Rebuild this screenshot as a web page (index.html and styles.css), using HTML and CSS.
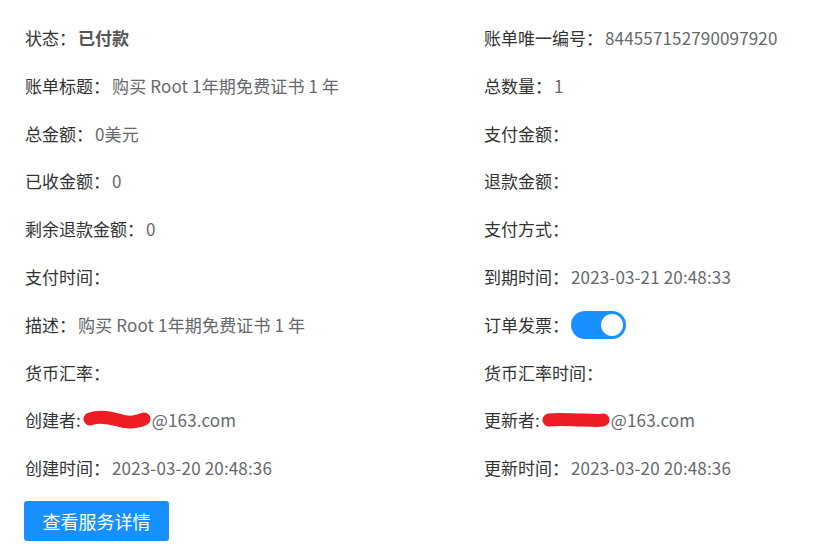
FILE: index.html
```html
<!DOCTYPE html>
<html lang="zh-CN">
<head>
<meta charset="utf-8">
<link rel="stylesheet" href="styles.css">
</head>
<body>
<div class="page">
  <div class="grid">
    <div class="item"><span class="label">状态：</span><span class="value strong">已付款</span></div>
    <div class="item"><span class="label">账单唯一编号：</span><span class="value">844557152790097920</span></div>

    <div class="item"><span class="label">账单标题：</span><span class="value">购买 Root 1年期免费证书 1 年</span></div>
    <div class="item"><span class="label">总数量：</span><span class="value">1</span></div>

    <div class="item"><span class="label">总金额：</span><span class="value">0美元</span></div>
    <div class="item"><span class="label">支付金额：</span><span class="value"></span></div>

    <div class="item"><span class="label">已收金额：</span><span class="value">0</span></div>
    <div class="item"><span class="label">退款金额：</span><span class="value"></span></div>

    <div class="item"><span class="label">剩余退款金额：</span><span class="value">0</span></div>
    <div class="item"><span class="label">支付方式：</span><span class="value"></span></div>

    <div class="item"><span class="label">支付时间：</span><span class="value"></span></div>
    <div class="item"><span class="label">到期时间：</span><span class="value">2023-03-21 20:48:33</span></div>

    <div class="item"><span class="label">描述：</span><span class="value">购买 Root 1年期免费证书 1 年</span></div>
    <div class="item"><span class="label">订单发票：</span><span class="switch"><span class="knob"></span></span></div>

    <div class="item"><span class="label">货币汇率：</span><span class="value"></span></div>
    <div class="item"><span class="label">货币汇率时间：</span><span class="value"></span></div>

    <div class="item"><span class="label">创建者:</span><span class="scribble"><svg width="68" height="20" viewBox="0 0 68 20"><path d="M7 9 C 15 6, 25 7, 35 10 S 52 13, 61 9" fill="none" stroke="#ee1c25" stroke-width="13" stroke-linecap="round"/></svg></span><span class="value">@163.com</span></div>
    <div class="item"><span class="label">更新者:</span><span class="scribble"><svg width="68" height="20" viewBox="0 0 68 20"><path d="M7 10 C 18 9, 30 10, 40 10 S 56 11, 61 10" fill="none" stroke="#ee1c25" stroke-width="13" stroke-linecap="round"/></svg></span><span class="value">@163.com</span></div>

    <div class="item"><span class="label">创建时间：</span><span class="value">2023-03-20 20:48:36</span></div>
    <div class="item"><span class="label">更新时间：</span><span class="value">2023-03-20 20:48:36</span></div>
  </div>
  <button class="btn">查看服务详情</button>
</div>
</body>
</html>
```
FILE: styles.css
```css
html, body {
  margin: 0;
  padding: 0;
  background: #fff;
}
.page {
  padding: 26px 0 0 25px;
  font-family: "Noto Sans CJK SC", "Noto Sans", sans-serif;
  font-size: 17px;
}
.grid {
  display: grid;
  grid-template-columns: 459px 1fr;
  row-gap: 23.8px;
}
.item {
  display: flex;
  align-items: center;
  height: 24px;
  line-height: 24px;
  white-space: nowrap;
}
.label {
  color: #333;
}
.value {
  color: #66686c;
  margin-left: 2px;
  letter-spacing: 0.15px;
}
.value.strong {
  font-weight: bold;
  color: #555;
  letter-spacing: 0;
}
.scribble {
  display: inline-flex;
  align-items: center;
  margin-left: 2px;
  margin-right: -1px;
}
.scribble svg {
  display: block;
}
.switch {
  margin-left: 2px;
  width: 55px;
  height: 28px;
  border-radius: 14px;
  background: #1890ff;
  display: inline-flex;
  align-items: center;
  justify-content: flex-end;
  padding-right: 3px;
  box-sizing: border-box;
}
.knob {
  width: 22px;
  height: 22px;
  border-radius: 50%;
  background: #fff;
}
.btn {
  margin-top: 21px;
  margin-left: -1px;
  width: 145px;
  height: 40px;
  border: none;
  border-radius: 3px;
  background: #1890ff;
  color: #fff;
  font-family: "Noto Sans CJK SC", "Noto Sans", sans-serif;
  font-size: 18px;
  padding: 0;
}
```
